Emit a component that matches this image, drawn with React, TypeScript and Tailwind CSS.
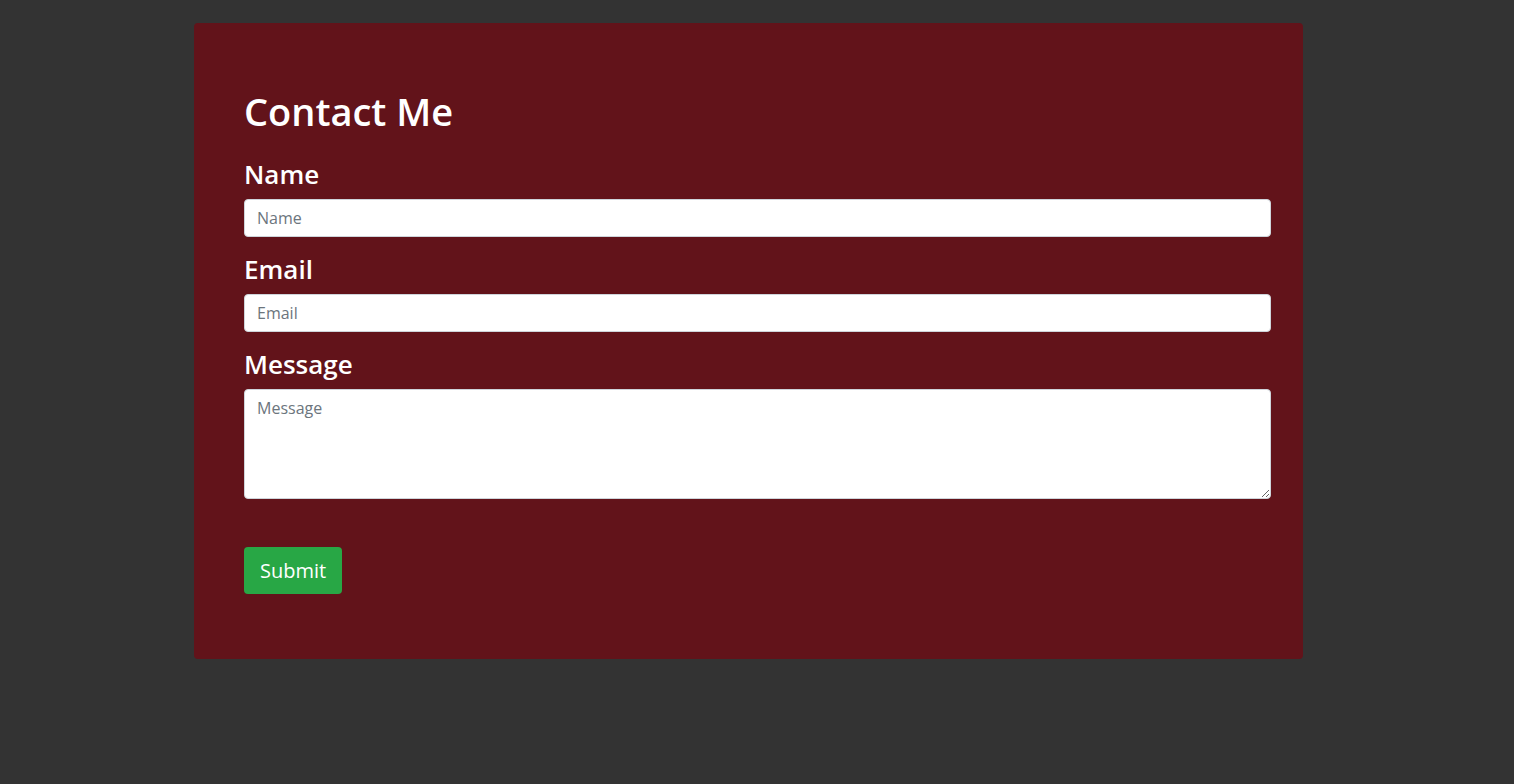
export default function App() {
  return (
    <div className="min-h-[784px] w-full bg-[#333333] pt-[23px]" style={{ fontFamily: '"Open Sans", "Noto Sans", sans-serif' }}>
      <div className="ml-[194px] w-[1109px] h-[636px] rounded-[4px] bg-[#62131a] pl-[50px] pr-[32px] pt-[64px]">
        <h1 className="text-[38px] leading-[48px] font-semibold text-white mb-[23px]">Contact Me</h1>
        <form className="flex flex-col">
          <div className="mb-[16px]">
            <label className="block text-[26px] leading-[32px] font-semibold text-white mb-[9px]">Name</label>
            <input placeholder="Name" className="block w-full h-[38px] rounded-[4px] border border-[#ced4da] bg-white px-[12px] text-[16px] text-[#495057] placeholder:text-[#6c757d] outline-none" />
          </div>
          <div className="mb-[16px]">
            <label className="block text-[26px] leading-[32px] font-semibold text-white mb-[9px]">Email</label>
            <input placeholder="Email" className="block w-full h-[38px] rounded-[4px] border border-[#ced4da] bg-white px-[12px] text-[16px] text-[#495057] placeholder:text-[#6c757d] outline-none" />
          </div>
          <div className="mb-[48px]">
            <label className="block text-[26px] leading-[32px] font-semibold text-white mb-[9px]">Message</label>
            <textarea placeholder="Message" className="block w-full h-[110px] rounded-[4px] border border-[#ced4da] bg-white px-[12px] py-[6px] text-[16px] text-[#495057] placeholder:text-[#6c757d] outline-none resize-y" />
          </div>
          <div>
            <button type="button" className="h-[47px] rounded-[4px] bg-[#28a745] px-[16px] text-[20px] text-white">Submit</button>
          </div>
        </form>
      </div>
    </div>
  );
}
